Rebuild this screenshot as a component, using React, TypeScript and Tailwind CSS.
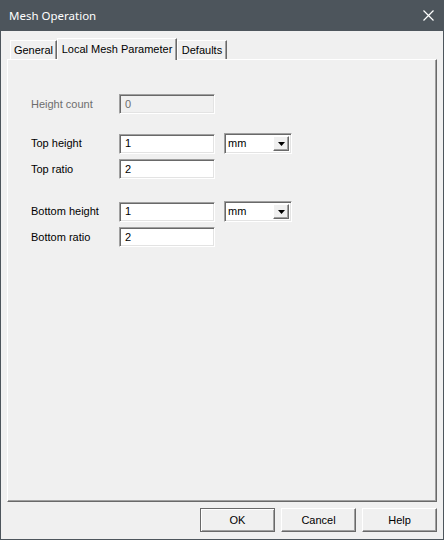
import React from "react";

const font = { fontFamily: '"Liberation Sans", Arial, sans-serif' };

function Input({ value, disabled }: { value: string; disabled?: boolean }) {
  return (
    <div
      className={`w-[96px] h-[20px] flex items-center pl-[5px] text-[11px] border border-t-[#a0a0a0] border-l-[#a0a0a0] border-r-white border-b-white shadow-[inset_1px_1px_0_#696969,inset_-1px_-1px_0_#e3e3e3] ${
        disabled ? "bg-[#f0f0f0] text-[#6d6d6d]" : "bg-white text-black"
      }`}
    >
      {value}
    </div>
  );
}

function Select({ value }: { value: string }) {
  return (
    <div className="ml-[9px] w-[68px] h-[21px] flex items-stretch bg-white border border-t-[#a0a0a0] border-l-[#a0a0a0] border-r-white border-b-white shadow-[inset_1px_1px_0_#696969,inset_-1px_-1px_0_#e3e3e3] p-[2px]">
      <div className="flex-1 flex items-center pl-[1px] text-[11px] text-black">{value}</div>
      <div className="w-[16px] flex items-center justify-center bg-[#f0f0f0] border border-t-white border-l-white border-r-[#696969] border-b-[#696969] shadow-[inset_-1px_-1px_0_#a0a0a0]">
        <svg width="7" height="4" viewBox="0 0 7 4">
          <path d="M0 0H7L3.5 4Z" fill="#000" />
        </svg>
      </div>
    </div>
  );
}

function Row({
  label,
  value,
  select,
  disabled,
  className,
}: {
  label: string;
  value: string;
  select?: boolean;
  disabled?: boolean;
  className?: string;
}) {
  return (
    <div className={`flex items-center ${className ?? ""}`}>
      <div className={`w-[88px] text-[11px] ${disabled ? "text-[#6d6d6d]" : "text-black"}`}>{label}</div>
      <Input value={value} disabled={disabled} />
      {select && <Select value="mm" />}
    </div>
  );
}

function Button({ label, def }: { label: string; def?: boolean }) {
  return (
    <div
      className={`w-[75px] h-[24px] flex items-center justify-center text-[11px] text-black bg-[#f0f0f0] ${
        def
          ? "border border-[#696969] shadow-[inset_1px_1px_0_#ffffff,inset_-1px_-1px_0_#a0a0a0]"
          : "border border-t-white border-l-white border-r-[#696969] border-b-[#696969] shadow-[inset_-1px_-1px_0_#a0a0a0]"
      }`}
    >
      {label}
    </div>
  );
}

export default function App() {
  return (
    <div
      className="w-[444px] h-[540px] flex flex-col border-x border-b border-[#4d555c] bg-[#f0f0f0]"
      style={font}
    >
      <div className="h-[31px] flex items-center justify-between bg-[#4d555c] pl-[9px] pr-[10px] -mx-px">
        <span className="text-white text-[11.5px]" style={{ fontFamily: '"Noto Sans", "Liberation Sans", sans-serif' }}>
          Mesh Operation
        </span>
        <svg width="11" height="11" viewBox="0 0 11 11">
          <path d="M0.5 0.5L10.5 10.5M10.5 0.5L0.5 10.5" stroke="#ffffff" strokeWidth="1.2" />
        </svg>
      </div>
      <div className="flex-1 flex flex-col px-[6px] pt-[7px]">
        <div className="flex items-end ml-[3px] h-[21px]">
          <div className="w-[47px] h-[19px] flex items-center justify-center pt-[1px] text-[11px] text-black border-t border-l border-t-white border-l-white border-r border-r-[#696969] shadow-[inset_-1px_0_0_#a0a0a0]">
            General
          </div>
          <div className="relative z-10 w-[120px] h-[22px] -mb-px flex items-center justify-center pb-[1px] text-[11px] text-black bg-[#f0f0f0] border-t border-l border-t-white border-l-white border-r border-r-[#696969] shadow-[inset_-1px_0_0_#a0a0a0]">
            Local Mesh Parameter
          </div>
          <div className="w-[50px] h-[19px] flex items-center justify-center pt-[1px] text-[11px] text-black border-t border-l border-t-white border-l-white border-r border-r-[#696969] shadow-[inset_-1px_0_0_#a0a0a0]">
            Defaults
          </div>
        </div>
        <div className="h-[443px] flex flex-col pl-[23px] border border-t-white border-l-white border-r-[#696969] border-b-[#696969] shadow-[inset_-1px_-1px_0_#a0a0a0]">
          <Row label="Height count" value="0" disabled className="mt-[34px]" />
          <Row label="Top height" value="1" select className="mt-[19px]" />
          <Row label="Top ratio" value="2" className="mt-[5px]" />
          <Row label="Bottom height" value="1" select className="mt-[22px]" />
          <Row label="Bottom ratio" value="2" className="mt-[5px]" />
        </div>
        <div className="flex justify-end gap-[6px] mt-[6px]">
          <Button label="OK" def />
          <Button label="Cancel" />
          <Button label="Help" />
        </div>
      </div>
    </div>
  );
}
